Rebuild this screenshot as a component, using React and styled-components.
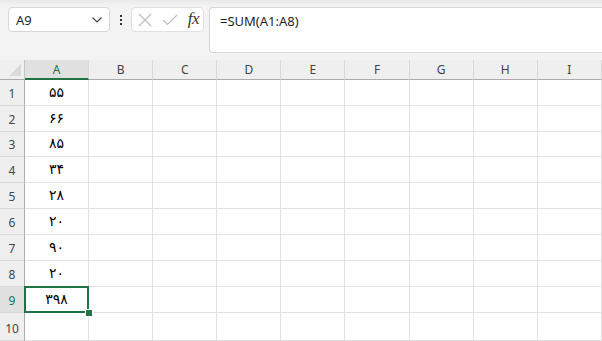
import React from 'react';
import styled, { createGlobalStyle } from 'styled-components';

const GlobalStyle = createGlobalStyle`
  html, body {
    margin: 0;
    padding: 0;
    background: #ffffff;
    font-family: "Noto Sans", "Open Sans", sans-serif;
    overflow: hidden;
  }
  * { box-sizing: border-box; }
`;

const GREEN = '#217346';
const COLS = ['A', 'B', 'C', 'D', 'E', 'F', 'G', 'H', 'I'];
const ROW_HEIGHTS = [26, 26, 25, 26, 26, 26, 26, 26, 26, 28];
const VALUES = ['۵۵', '۶۶', '۸۵', '۳۴', '۲۸', '۲۰', '۹۰', '۲۰', '۳۹۸', ''];

const Page = styled.div`
  width: 602px;
  height: 341px;
  display: flex;
  flex-direction: column;
  overflow: hidden;
`;

const Bar = styled.div`
  height: 60px;
  flex: none;
  display: flex;
  align-items: flex-start;
  padding: 7px 0 0 8px;
  background: linear-gradient(#e9e9e9 0, #f3f3f3 6px, #f3f3f3 100%);
`;

const NameBox = styled.div`
  width: 102px;
  height: 25px;
  background: #fff;
  border: 1px solid #d6d6d6;
  border-radius: 4px;
  display: flex;
  align-items: center;
  justify-content: space-between;
  padding: 0 6px 0 7px;
  font-size: 13px;
  color: #1f1f1f;
`;

const Dots = styled.div`
  width: 21px;
  height: 25px;
  display: flex;
  flex-direction: column;
  align-items: center;
  justify-content: center;
  gap: 2px;
  span {
    width: 2px;
    height: 2px;
    background: #333;
  }
`;

const ActionBox = styled.div`
  width: 73px;
  height: 25px;
  background: #fff;
  border: 1px solid #e0e0e0;
  border-radius: 4px;
  display: flex;
  align-items: center;
  justify-content: space-between;
  padding: 0 4px 0 6px;
`;

const Fx = styled.span`
  font-family: "Liberation Serif", "DejaVu Serif", serif;
  font-style: italic;
  font-size: 17px;
  color: #333;
  letter-spacing: -0.5px;
  padding-bottom: 2px;
`;

const FormulaBox = styled.div`
  margin-left: 5px;
  flex: 1;
  height: 46px;
  background: #fff;
  border: 1px solid #d6d6d6;
  border-right: none;
  border-radius: 4px 0 0 4px;
  padding: 4px 0 0 10px;
  font-size: 13px;
  color: #1f1f1f;
`;

const Sheet = styled.div`
  display: grid;
  grid-template-columns: 25px repeat(9, 64.1px);
  grid-template-rows: 20px ${ROW_HEIGHTS.map(h => h + 'px').join(' ')};
  background: #fff;
`;

const Corner = styled.div`
  background: #efefef;
  border-right: 1px solid #c6c6c6;
  border-bottom: 1px solid #ababab;
  position: relative;
  &::after {
    content: '';
    position: absolute;
    right: 3px;
    bottom: 3px;
    border-style: solid;
    border-width: 0 0 12px 12px;
    border-color: transparent transparent #dadada transparent;
  }
`;

const ColHead = styled.div`
  background: ${p => (p.$active ? '#e1e1e1' : '#efefef')};
  border-right: 1px solid #d9d9d9;
  border-bottom: ${p => (p.$active ? `2px solid ${GREEN}` : '1px solid #ababab')};
  display: flex;
  align-items: center;
  justify-content: center;
  padding-top: ${p => (p.$active ? '1px' : '0')};
  font-size: 12px;
  color: ${p => (p.$active ? GREEN : '#444')};
`;

const RowHead = styled.div`
  background: ${p => (p.$active ? '#e1e1e1' : '#efefef')};
  border-right: 1px solid #ababab;
  border-bottom: 1px solid #d9d9d9;
  display: flex;
  align-items: flex-end;
  justify-content: center;
  padding-bottom: 3px;
  font-size: 12px;
  color: ${p => (p.$active ? GREEN : '#444')};
`;

const Cell = styled.div`
  position: relative;
  z-index: ${p => (p.$selected ? 2 : 'auto')};
  border-right: 1px solid #e1e1e1;
  border-bottom: 1px solid #e1e1e1;
  display: flex;
  align-items: center;
  justify-content: center;
  font-family: "DejaVu Sans", sans-serif;
  font-size: 14px;
  color: #000;
  padding-bottom: 2px;
`;

const Selection = styled.div`
  position: absolute;
  left: -1px;
  top: -1px;
  right: -1px;
  bottom: -1px;
  border: 2px solid ${GREEN};
  &::after {
    content: '';
    position: absolute;
    right: -5px;
    bottom: -5px;
    width: 6px;
    height: 6px;
    background: ${GREEN};
    box-shadow: 0 0 0 1px #fff;
  }
`;

const Chevron = () => (
  <svg width="12" height="8" viewBox="0 0 12 8">
    <path d="M1.5 1.5 L6 6 L10.5 1.5" fill="none" stroke="#444" strokeWidth="1.2" />
  </svg>
);

const Cross = () => (
  <svg width="14" height="14" viewBox="0 0 14 14">
    <path d="M1 1 L13 13 M13 1 L1 13" stroke="#bdbdbd" strokeWidth="1.2" />
  </svg>
);

const Check = () => (
  <svg width="16" height="12" viewBox="0 0 16 12">
    <path d="M1 6 L5.5 10.5 L15 1" fill="none" stroke="#bdbdbd" strokeWidth="1.2" />
  </svg>
);

export default function App() {
  return (
    <Page>
      <GlobalStyle />
      <Bar>
        <NameBox>
          <span>A9</span>
          <Chevron />
        </NameBox>
        <Dots>
          <span />
          <span />
          <span />
        </Dots>
        <ActionBox>
          <Cross />
          <Check />
          <Fx>fx</Fx>
        </ActionBox>
        <FormulaBox>=SUM(A1:A8)</FormulaBox>
      </Bar>
      <Sheet>
        <Corner />
        {COLS.map(c => (
          <ColHead key={c} $active={c === 'A'}>
            {c}
          </ColHead>
        ))}
        {ROW_HEIGHTS.map((_, i) => {
          const selected = i === 8;
          return (
            <React.Fragment key={i}>
              <RowHead $active={selected}>{i + 1}</RowHead>
              {COLS.map(c => (
                <Cell key={c} $selected={c === 'A' && selected}>
                  {c === 'A' ? VALUES[i] : ''}
                  {c === 'A' && selected && <Selection />}
                </Cell>
              ))}
            </React.Fragment>
          );
        })}
      </Sheet>
    </Page>
  );
}
